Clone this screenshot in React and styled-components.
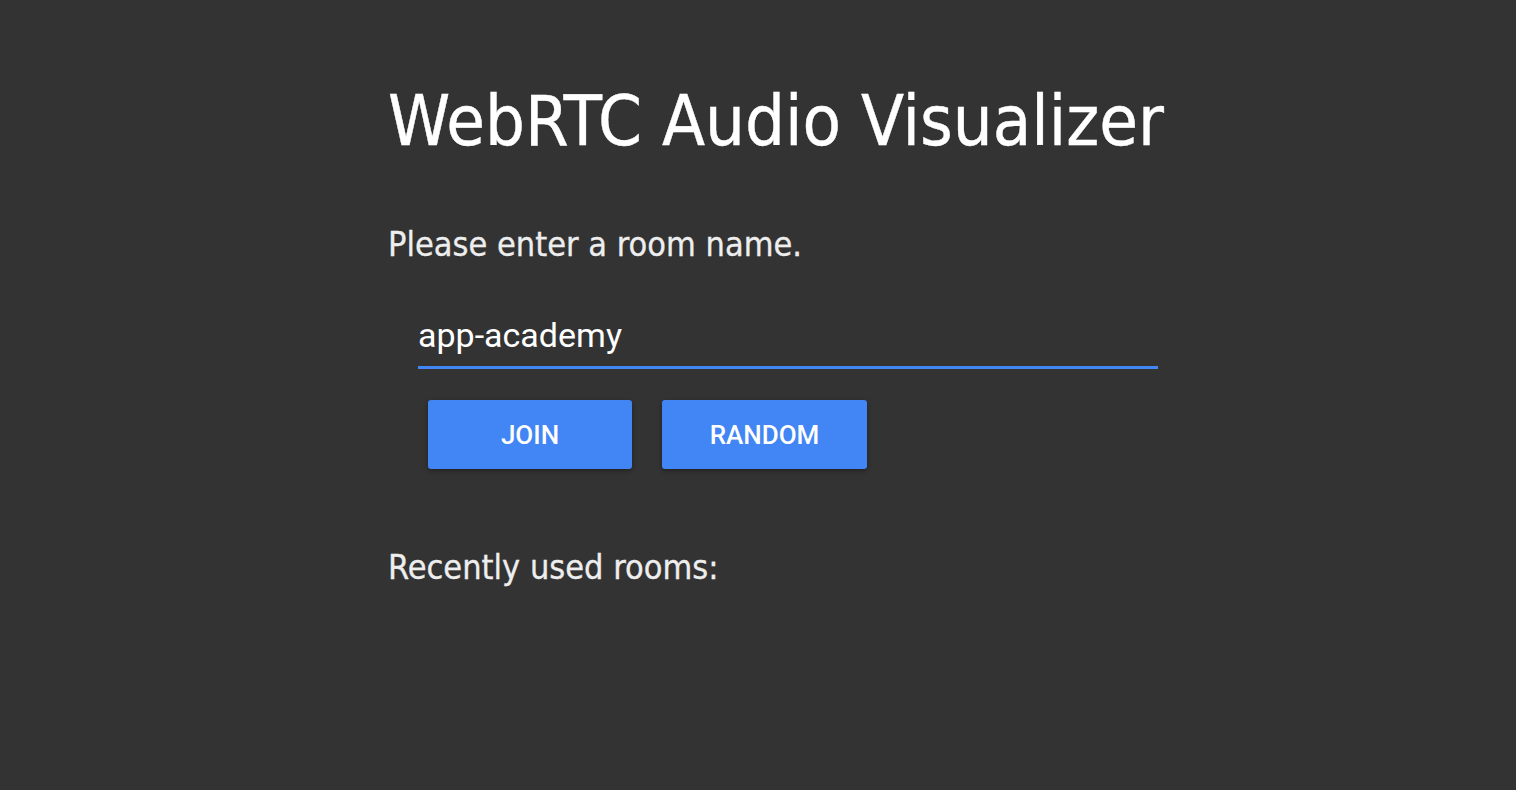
import React, { useState } from "react";
import styled, { createGlobalStyle } from "styled-components";

const GlobalStyle = createGlobalStyle`
  html, body {
    margin: 0;
    padding: 0;
    background: #333333;
  }
`;

const Page = styled.div`
  min-height: 790px;
  background: #333333;
  color: #ffffff;
  font-family: "DejaVu Sans Condensed", "DejaVu Sans", sans-serif;
  padding: 76px 0 0 388px;
  box-sizing: border-box;
`;

const Title = styled.h1`
  margin: 0;
  font-size: 70px;
  font-weight: normal;
  line-height: 90px;
  color: #ffffff;
  -webkit-text-stroke: 0.4px #ffffff;
`;

const Label = styled.p`
  margin: ${(p) => p.$top}px 0 0 0;
  font-size: 34px;
  line-height: 44px;
  color: #eeeeee;
  -webkit-text-stroke: 0.3px #eeeeee;
`;

const Form = styled.div`
  margin-left: 30px;
  margin-top: 53px;
  width: 740px;
`;

const Input = styled.input`
  display: block;
  width: 100%;
  box-sizing: border-box;
  background: transparent;
  border: none;
  border-bottom: 3px solid #4285f4;
  color: #ffffff;
  font-family: Roboto, "Liberation Sans", sans-serif;
  font-size: 34px;
  padding: 0 0 16px 0;
  height: 50px;
  outline: none;
`;

const Buttons = styled.div`
  display: flex;
  gap: 30px;
  margin: 31px 0 0 10px;
`;

const Button = styled.button`
  width: ${(p) => p.$w}px;
  height: 69px;
  border: none;
  border-radius: 3px;
  background: #4285f4;
  color: #ffffff;
  font-family: Roboto, "Liberation Sans", sans-serif;
  font-size: 26px;
  font-weight: 500;
  text-transform: uppercase;
  box-shadow: 0 2px 5px rgba(0, 0, 0, 0.35);
  cursor: pointer;
`;

export default function App() {
  const [room, setRoom] = useState("app-academy");
  return (
    <Page>
      <GlobalStyle />
      <Title>WebRTC Audio Visualizer</Title>
      <Label $top={56}>Please enter a room name.</Label>
      <Form>
        <Input value={room} onChange={(e) => setRoom(e.target.value)} />
        <Buttons>
          <Button $w={204}>Join</Button>
          <Button $w={205}>Random</Button>
        </Buttons>
      </Form>
      <Label $top={76}>Recently used rooms:</Label>
    </Page>
  );
}
